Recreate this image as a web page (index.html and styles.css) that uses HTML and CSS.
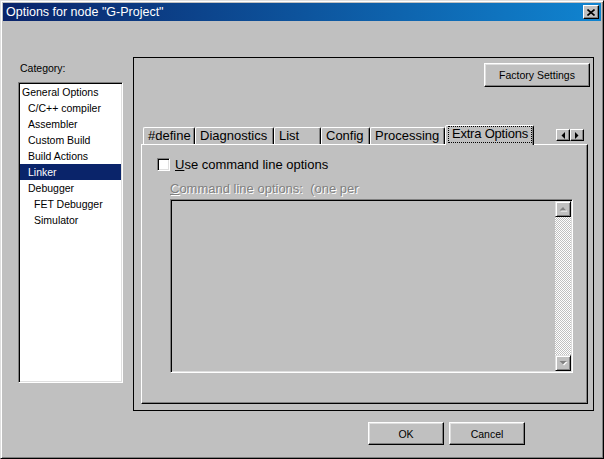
FILE: index.html
```html
<!DOCTYPE html>
<html lang="en">
<head>
    <meta charset="UTF-8">
    <title>Options for node "G-Project"</title>
    <link rel="stylesheet" href="styles.css">
</head>
<body>
    <div class="window">
        <div class="titlebar">
            <span class="title">Options for node "G-Project"</span>
            <button class="close" aria-label="Close">
                <svg width="8" height="7" viewBox="0 0 8 7"><path d="M0.5 0.5 L7.5 6.5 M7.5 0.5 L0.5 6.5" stroke="#000" stroke-width="1.6"/></svg>
            </button>
        </div>

        <div class="main">
            <div class="category">
                <div class="cat-label">Category:</div>
                <ul class="cat-list">
                    <li class="lvl0">General Options</li>
                    <li class="lvl1">C/C++ compiler</li>
                    <li class="lvl1">Assembler</li>
                    <li class="lvl1">Custom Build</li>
                    <li class="lvl1">Build Actions</li>
                    <li class="lvl1 selected">Linker</li>
                    <li class="lvl1">Debugger</li>
                    <li class="lvl2">FET Debugger</li>
                    <li class="lvl2">Simulator</li>
                </ul>
            </div>

            <div class="options-frame">
                <div class="frame-top">
                    <button class="btn factory">Factory Settings</button>
                </div>

                <div class="tabstrip">
                    <div class="tab tab-define">#define</div>
                    <div class="tab tab-diag">Diagnostics</div>
                    <div class="tab tab-list">List</div>
                    <div class="tab tab-config">Config</div>
                    <div class="tab tab-proc">Processing</div>
                    <div class="tab tab-extra active"><span class="focus">Extra Options</span></div>
                    <div class="tab-scroll">
                        <button class="arrow-btn" aria-label="Previous tab">
                            <svg width="4" height="7" viewBox="0 0 4 7"><polygon points="4,0 4,7 0.5,3.5" fill="#000"/></svg>
                        </button>
                        <button class="arrow-btn" aria-label="Next tab">
                            <svg width="4" height="7" viewBox="0 0 4 7"><polygon points="0,0 0,7 3.5,3.5" fill="#000"/></svg>
                        </button>
                    </div>
                </div>

                <div class="tab-panel">
                    <label class="check-row">
                        <span class="checkbox"></span>
                        <span><u>U</u>se command line options</span>
                    </label>
                    <div class="field-label"><u>C</u>ommand line options:  (one per</div>
                    <div class="textbox">
                        <div class="vscroll">
                            <div class="sb-btn">
                                <svg width="9" height="6" viewBox="0 0 9 6"><polygon points="0.5,4.5 4,1 7.5,4.5" fill="#fff" transform="translate(1,1)"/><polygon points="0.5,4.5 4,1 7.5,4.5" fill="#808080"/></svg>
                            </div>
                            <div class="sb-track"></div>
                            <div class="sb-btn">
                                <svg width="9" height="6" viewBox="0 0 9 6"><polygon points="0.5,1 7.5,1 4,4.5" fill="#fff" transform="translate(1,1)"/><polygon points="0.5,1 7.5,1 4,4.5" fill="#808080"/></svg>
                            </div>
                        </div>
                    </div>
                </div>
            </div>
        </div>

        <div class="footer">
            <button class="btn dlg-btn">OK</button>
            <button class="btn dlg-btn">Cancel</button>
        </div>
    </div>
</body>
</html>
```

FILE: styles.css
```css
body {
    margin: 0;
    background: #c0c0c0;
    font-family: "Liberation Sans", Arial, sans-serif;
    color: #000;
}
.window {
    width: 604px;
    height: 459px;
    box-sizing: border-box;
    border: 1px solid;
    border-color: #dfdfdf #000 #000 #dfdfdf;
    box-shadow: inset 1px 1px #fff, inset -1px -1px #808080;
    padding: 2px;
    display: flex;
    flex-direction: column;
}

/* title bar */
.titlebar {
    height: 18px;
    flex: none;
    display: flex;
    align-items: center;
    justify-content: space-between;
    padding: 0 2px 0 3px;
    background: linear-gradient(to right, #0a246a, #1084d0);
    color: #fff;
}
.title {
    font-size: 12.5px;
    white-space: pre;
}
.close {
    width: 16px;
    height: 14px;
    padding: 0;
    display: flex;
    align-items: center;
    justify-content: center;
    background: #c0c0c0;
    border: 1px solid;
    border-color: #fff #000 #000 #fff;
    box-shadow: inset -1px -1px #808080;
}

/* main area */
.main {
    display: flex;
    gap: 10px;
    padding: 36px 0 0 15px;
}
.category {
    margin-top: 5px;
}
.cat-label {
    font-size: 10.5px;
    line-height: 13px;
    padding-left: 2px;
    margin-bottom: 7px;
}
.cat-list {
    list-style: none;
    margin: 0;
    width: 105px;
    height: 301px;
    box-sizing: border-box;
    padding: 1px;
    background: #fff;
    border: 1px solid;
    border-color: #808080 #fff #fff #808080;
    box-shadow: inset 1px 1px #000, inset -1px -1px #dfdfdf;
    font-size: 10.5px;
}
.cat-list li {
    height: 16px;
    line-height: 16px;
    white-space: nowrap;
}
.lvl0 { padding-left: 2px; }
.lvl1 { padding-left: 8px; }
.lvl2 { padding-left: 14px; }
.cat-list .selected {
    background: #0a246a;
    color: #fff;
}

.options-frame {
    width: 461px;
    height: 354px;
    box-sizing: border-box;
    border: 1px solid #000;
    display: flex;
    flex-direction: column;
}
.frame-top {
    display: flex;
    justify-content: flex-end;
    padding: 5px 3px 0 0;
}
.btn {
    font-family: "Liberation Sans", Arial, sans-serif;
    font-size: 10.5px;
    color: #000;
    background: #c0c0c0;
    border: 1px solid;
    border-color: #fff #000 #000 #fff;
    box-shadow: inset -1px -1px #808080, inset 1px 1px #dfdfdf;
    padding: 0;
}
.factory {
    width: 106px;
    height: 24px;
}

/* tabs */
.tabstrip {
    display: flex;
    align-items: flex-end;
    height: 19px;
    margin: 38px 5px 0 7px;
    padding-left: 2px;
    position: relative;
    z-index: 1;
}
.tab {
    height: 17px;
    box-sizing: border-box;
    border: 1px solid;
    border-bottom: none;
    border-color: #fff #000 transparent #fff;
    border-radius: 2px 2px 0 0;
    box-shadow: inset -1px 0 #808080;
    font-size: 13px;
    line-height: 16px;
    padding-left: 4px;
    white-space: nowrap;
}
.tab-define { width: 52px; }
.tab-diag { width: 79px; }
.tab-list { width: 47px; }
.tab-config { width: 49px; }
.tab-proc { width: 75px; }
.tab-extra { width: 89px; }
.tab.active {
    height: 20px;
    margin-bottom: -1px;
    background: #c0c0c0;
    padding: 0 0 0 2px;
}
.focus {
    display: block;
    width: 84px;
    height: 17px;
    box-sizing: border-box;
    border: 1px dotted #000;
    line-height: 13px;
    text-align: center;
    letter-spacing: -0.2px;
}
.tab-scroll {
    margin: 0 4px 3px auto;
    display: flex;
}
.arrow-btn {
    width: 14px;
    height: 12px;
    padding: 0;
    display: flex;
    align-items: center;
    justify-content: center;
    background: #c0c0c0;
    border: 1px solid;
    border-color: #fff #000 #000 #fff;
    box-shadow: inset -1px -1px #808080;
}

.tab-panel {
    height: 260px;
    box-sizing: border-box;
    margin: 0 5px 6px 7px;
    padding: 13px 0 0 15px;
    border: 1px solid;
    border-color: #fff #000 #000 #fff;
    box-shadow: inset -1px -1px #808080;
    font-size: 13px;
}
.check-row {
    display: flex;
    align-items: center;
    gap: 5px;
    height: 13px;
    line-height: 13px;
}
.checkbox {
    width: 13px;
    height: 13px;
    box-sizing: border-box;
    background: #fff;
    border: 1px solid;
    border-color: #808080 #fff #fff #808080;
    box-shadow: inset 1px 1px #000, inset -1px -1px #dfdfdf;
}
.field-label {
    margin: 10px 0 0 13px;
    line-height: 15px;
    color: #808080;
    text-shadow: 1px 1px #fff;
    white-space: pre;
}
.textbox {
    width: 403px;
    height: 174px;
    box-sizing: border-box;
    margin: 3px 0 0 13px;
    padding: 1px;
    display: flex;
    justify-content: flex-end;
    border: 1px solid;
    border-color: #808080 #fff #fff #808080;
    box-shadow: inset 1px 1px #000, inset -1px -1px #dfdfdf;
}
.vscroll {
    width: 16px;
    display: flex;
    flex-direction: column;
}
.sb-btn {
    width: 16px;
    height: 16px;
    box-sizing: border-box;
    display: flex;
    align-items: center;
    justify-content: center;
    background: #c0c0c0;
    border: 1px solid;
    border-color: #dfdfdf #000 #000 #dfdfdf;
    box-shadow: inset 1px 1px #fff, inset -1px -1px #808080;
}
.sb-track {
    flex: 1;
    background: repeating-conic-gradient(#fff 0 25%, #c0c0c0 0 50%) 0 0 / 2px 2px;
}

/* dialog buttons */
.footer {
    display: flex;
    gap: 5px;
    padding: 11px 0 0 365px;
}
.dlg-btn {
    width: 76px;
    height: 23px;
}
```
